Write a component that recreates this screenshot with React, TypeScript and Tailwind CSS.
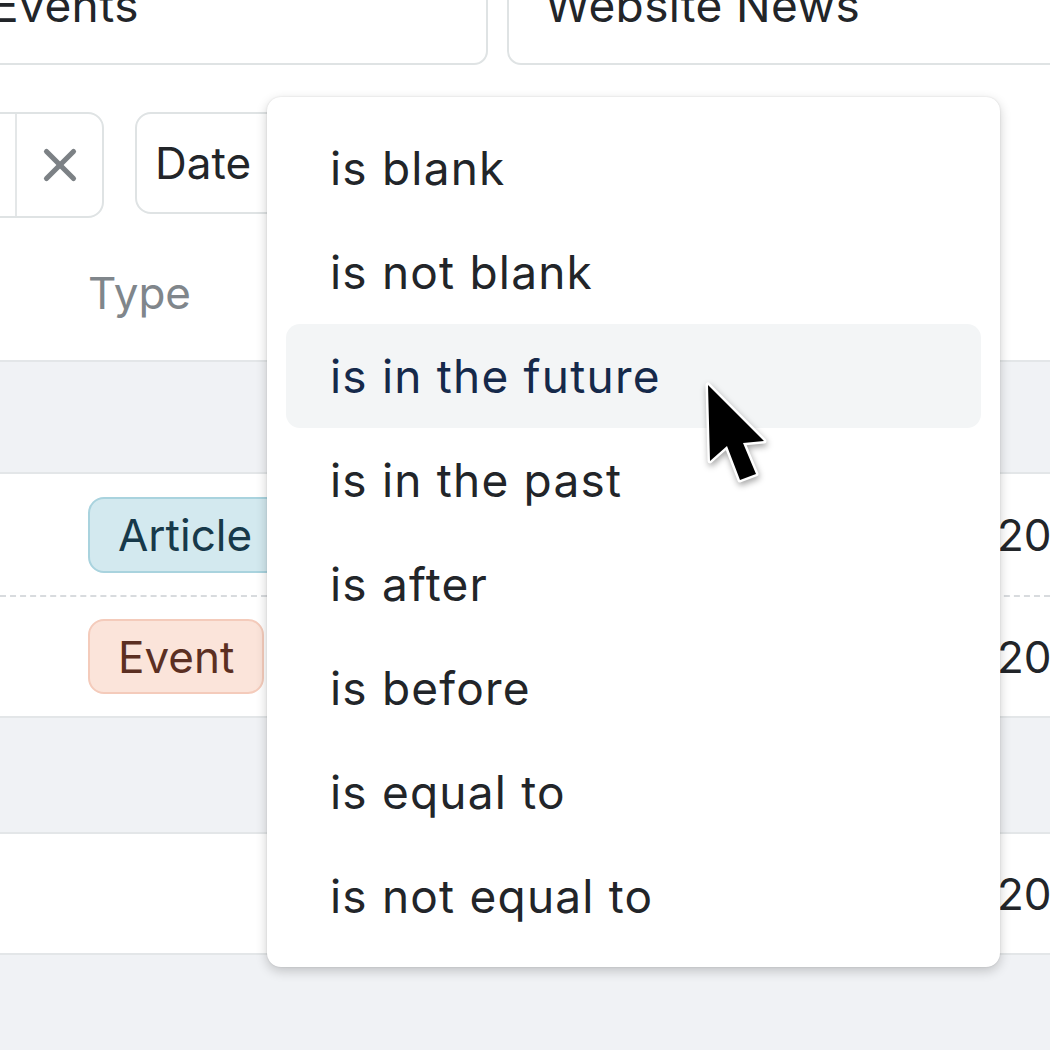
import { X } from "lucide-react";

const operators = [
  "is blank",
  "is not blank",
  "is in the future",
  "is in the past",
  "is after",
  "is before",
  "is equal to",
  "is not equal to",
];

const hovered = "is in the future";

function Cursor() {
  return (
    <svg
      className="absolute left-[697px] top-[374px]"
      width="90"
      height="130"
      viewBox="0 0 90 130"
      style={{ filter: "drop-shadow(1px 3px 3px rgba(0,0,0,0.35))" }}
    >
      <path
        d="M11 11 L13 87 L30 72 L43 106 L59 100 L46 69 L67 67 Z"
        fill="#000"
        stroke="#fff"
        strokeWidth="5"
        strokeLinejoin="round"
        paintOrder="stroke"
      />
    </svg>
  );
}

export default function App() {
  return (
    <div className="relative h-[1050px] w-[1050px] overflow-hidden bg-white font-['Inter',sans-serif] text-[44px] text-[#222529]">
      {/* source cards */}
      <div className="-ml-[66px] -mt-[60px] flex gap-[19px] text-[46px] tracking-[0.4px]">
        <div className="h-[125px] w-[554px] shrink-0 rounded-[14px] border-2 border-[#dfe3e4] pl-[55px] pt-[40px] leading-none">
          Events
        </div>
        <div className="h-[125px] w-[600px] shrink-0 rounded-[14px] border-2 border-[#dfe3e4] pl-[36px] pt-[40px] leading-none">
          Website News
        </div>
      </div>

      {/* filter chips */}
      <div className="-ml-[200px] mt-[47px] flex h-[106px] gap-[31px]">
        <div className="flex shrink-0 rounded-[16px] border-2 border-[#dfe3e4]">
          <span className="w-[213px]" />
          <span className="flex w-[87px] items-center justify-center border-l-2 border-[#e4e7e8]">
            <X className="size-[54px] text-[#7c8185]" strokeWidth={2.3} />
          </span>
        </div>
        <div className="flex h-[102px] w-[260px] shrink-0 items-center rounded-[16px] border-2 border-[#dfe3e4] pl-[18px]">
          Date
        </div>
      </div>

      {/* table */}
      <div className="flex h-[144px] items-center border-b-2 border-[#e3e6e8] pl-[88px] pt-[8px] text-[#80868b]">
        Type
      </div>
      <div className="h-[112px] border-b-2 border-[#e3e6e8] bg-[#f0f2f5]" />
      <div className="flex h-[123px] items-center border-b-2 border-dashed border-[#d8dbde]">
        <div className="w-[997px] shrink-0 pl-[88px]">
          <span className="inline-flex h-[76px] items-center rounded-[16px] border-2 border-[#a9d3de] bg-[#d3e9ef] px-[28px] text-[#17394a]">
            Article
          </span>
        </div>
        <div className="whitespace-nowrap">2023-04-18</div>
      </div>
      <div className="flex h-[121px] items-center border-b-2 border-[#e3e6e8]">
        <div className="w-[997px] shrink-0 pl-[88px]">
          <span className="inline-flex h-[75px] items-center rounded-[16px] border-2 border-[#f4cbbb] bg-[#fbe4da] px-[28px] text-[#5b2f22]">
            Event
          </span>
        </div>
        <div className="whitespace-nowrap">2023-05-02</div>
      </div>
      <div className="h-[116px] border-b-2 border-[#e3e6e8] bg-[#f0f2f5]" />
      <div className="flex h-[121px] items-center border-b-2 border-[#e3e6e8]">
        <div className="w-[997px] shrink-0" />
        <div className="whitespace-nowrap">2023-06-11</div>
      </div>
      <div className="h-full bg-[#f0f2f5]" />

      {/* operator dropdown */}
      <div className="absolute left-[267px] top-[97px] flex w-[733px] flex-col rounded-[14px] bg-white p-[19px] text-[46px] tracking-[1.2px] shadow-[0_4px_12px_rgba(0,0,0,0.2),0_0_2px_rgba(0,0,0,0.12)]">
        {operators.map((op) => (
          <div
            key={op}
            className={
              op === hovered
                ? "flex h-[104px] items-center rounded-[14px] bg-[#f3f5f6] pl-[44px] text-[#15294a]"
                : "flex h-[104px] items-center pl-[44px]"
            }
          >
            {op}
          </div>
        ))}
      </div>

      <Cursor />
    </div>
  );
}
